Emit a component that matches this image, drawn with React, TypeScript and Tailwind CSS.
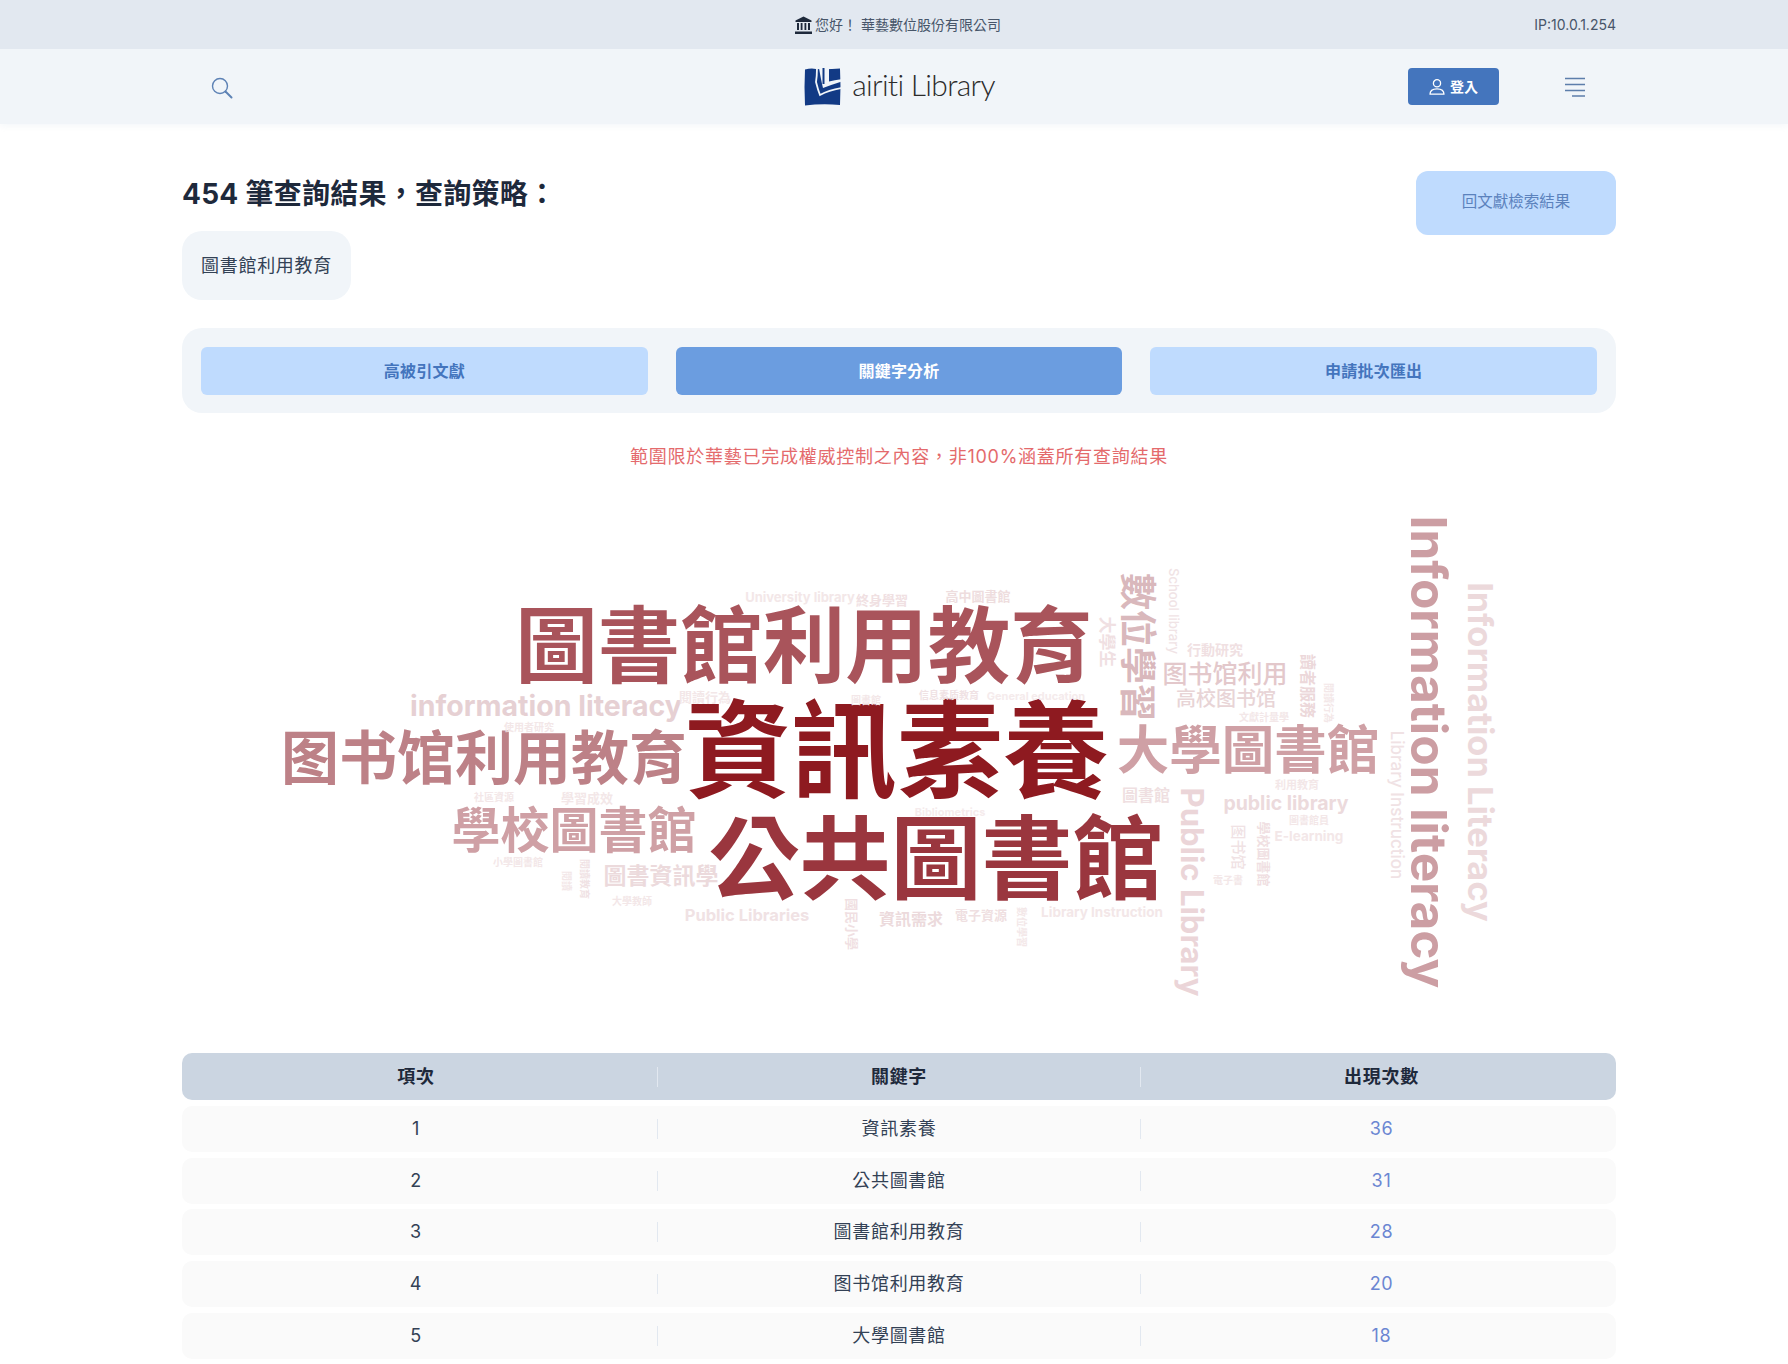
const TABS = [
  { label: "高被引文獻", active: false },
  { label: "關鍵字分析", active: true },
  { label: "申請批次匯出", active: false },
];

const ROWS = [
  { no: 1, keyword: "資訊素養", count: 36 },
  { no: 2, keyword: "公共圖書館", count: 31 },
  { no: 3, keyword: "圖書館利用教育", count: 28 },
  { no: 4, keyword: "图书馆利用教育", count: 20 },
  { no: 5, keyword: "大學圖書館", count: 18 },
];

// word cloud: text, centre x, centre y (page coords), size, colour, weight, rotated
type Word = [string, number, number, number, string, number, boolean?];

const WORDS: Word[] = [
  ["資訊素養", 897, 750, 106, "#8e1a20", 700],
  ["公共圖書館", 936, 858, 91, "#9a363e", 700],
  ["圖書館利用教育", 804, 645, 82.5, "#a9545b", 700],
  ["图书馆利用教育", 484, 757, 58, "#bd8187", 600],
  ["學校圖書館", 574, 829, 49, "#cfa0a5", 600],
  ["大學圖書館", 1248, 749, 52.5, "#cfa0a5", 600],
  ["information literacy", 546, 705, 28.5, "#e6d0d3", 700],
  ["Information literacy", 1428, 751, 49.5, "#cc9ea3", 700, true],
  ["Information Literacy", 1480, 751, 34.5, "#ecd9db", 700, true],
  ["Public Library", 1192, 891, 31, "#ebd5d8", 700, true],
  ["數位學習", 1137, 646, 37, "#d9b8bc", 600, true],
  ["Library Instruction", 1396, 804, 17, "#f0e2e4", 500, true],
  ["School library", 1173, 610, 13, "#f0e3e5", 500, true],
  ["大學生", 1106, 641, 17, "#f0e0e2", 600, true],
  ["图书馆利用", 1225, 673, 25, "#e3c8cb", 500],
  ["高校图书馆", 1226, 698, 20, "#e8d4d6", 500],
  ["行動研究", 1215, 649, 14, "#f0e0e2", 600],
  ["讀者服務", 1308, 685, 16, "#ecd8da", 600, true],
  ["閱讀行為", 1329, 702, 10, "#f3e7e8", 600, true],
  ["文獻計量學", 1264, 716, 10, "#f3e7e8", 600],
  ["利用教育", 1297, 784, 11, "#f3e7e8", 600],
  ["public library", 1286, 803, 19.5, "#ecdadc", 700],
  ["圖書館", 1146, 794, 16, "#efdfe1", 600],
  ["圖書館員", 1309, 819, 10, "#f3e7e8", 600],
  ["E-learning", 1309, 836, 13.5, "#f3e7e8", 700],
  ["图书馆", 1238, 846, 15, "#f0e2e4", 500, true],
  ["學校圖書館", 1263, 853, 13, "#f0dfe2", 600, true],
  ["電子書", 1228, 879, 10, "#f3e7e8", 600],
  ["Library Instruction", 1102, 912, 13.5, "#f3e7e8", 700],
  ["電子資源", 981, 914, 13, "#efdfe1", 600],
  ["資訊需求", 911, 918, 16, "#ecdadc", 600],
  ["Public Libraries", 747, 914, 16.5, "#f0e2e4", 700],
  ["國民小學", 851, 923, 13, "#f0dfe2", 600, true],
  ["數位學習", 1022, 926, 10, "#f3e7e8", 600, true],
  ["大學教師", 632, 900, 10, "#f3e7e8", 600],
  ["圖書資訊學", 661, 875, 23, "#ecdadc", 600],
  ["小學圖書館", 518, 861, 10, "#f3e7e8", 600],
  ["閱讀", 567, 880, 10, "#f3e7e8", 600, true],
  ["閱讀教育", 585, 878, 10, "#f0e2e4", 600, true],
  ["學習成效", 587, 797, 13, "#f3e7e8", 600],
  ["社區資源", 494, 796, 10, "#f3e7e8", 600],
  ["使用者研究", 529, 726, 10, "#f3e7e8", 600],
  ["閱讀行為", 705, 696, 13, "#f3e7e8", 600],
  ["University library", 800, 596, 13, "#f3e7e8", 700],
  ["終身學習", 882, 599, 13, "#f0e0e2", 600],
  ["高中圖書館", 978, 595, 13, "#eeddde", 600],
  ["圖書館", 866, 699, 10, "#f3e7e8", 600],
  ["信息素质教育", 949, 694, 10, "#f0e2e4", 600],
  ["General education", 1036, 695, 11, "#f5ebec", 700],
  ["Bibliometrics", 950, 811, 11, "#f5ebec", 700],
];

function BankIcon() {
  return (
    <svg viewBox="0 0 17 18" className="mr-[3px] h-[18px] w-[17px]" fill="#1e293b">
      <path d="M8.5 0.5 L16.5 4.5 V6 H0.5 V4.5 Z" />
      <path d="M2 7h2v7H2zM5.7 7h1.8v7H5.7zM9.5 7h1.8v7H9.5zM13 7h2v7h-2z" />
      <path d="M0 15.5h17V18H0z" />
    </svg>
  );
}

function SearchIcon() {
  return (
    <svg viewBox="0 0 22 22" className="mt-[2px] h-[22px] w-[22px] text-[#5d82b5]" fill="none" stroke="currentColor">
      <circle cx="9" cy="9" r="7.5" strokeWidth="1.4" />
      <path d="M14.5 14.5 L20.5 20.5" strokeWidth="2" strokeLinecap="round" />
    </svg>
  );
}

function UserIcon() {
  return (
    <svg viewBox="0 0 16 16" className="h-4 w-4" fill="none" stroke="currentColor" strokeWidth="1.3">
      <circle cx="8" cy="4.3" r="3.6" />
      <path d="M1 15.2c0-3.6 3-5.4 7-5.4s7 1.8 7 5.4z" strokeLinejoin="round" />
    </svg>
  );
}

function LogoMark() {
  return (
    <svg viewBox="0 0 37 38" className="h-[38px] w-[37px]">
      <path d="M1 1.5 Q7 0 12 1 L12 1 Q24 1.5 36 0.5 Q37 18 36 37 Q18 35.5 1 37.5 Q0 19 1 1.5 Z" fill="#123a85" />
      <path d="M13 -1 Q13 8 12 14 Q14 22 16 27 Q25 22 38 20" fill="none" stroke="#f1f5f9" strokeWidth="1.8" />
      <path d="M15 0 L15 0 Q17 12 19 20 Q27 17 38 13.5 L38 11 Q31 12 25 13.5 L25 0 Z" fill="#f1f5f9" />
      <path d="M19.5 0 L19.5 16" stroke="#123a85" strokeWidth="2" />
    </svg>
  );
}

function MenuIcon() {
  return (
    <svg viewBox="0 0 20 20" className="h-5 w-5 text-[#5d7eab]" fill="none" stroke="currentColor" strokeWidth="1.6">
      <path d="M0 1.5h20M0 7.5h20M0 13.5h20M7 19h13" />
    </svg>
  );
}

function WordCloud() {
  return (
    <div className="relative h-[560px]">
      {WORDS.map(([text, x, y, size, color, weight, rotated], i) => (
        <span
          key={i}
          className={
            rotated
              ? "absolute whitespace-nowrap leading-none -translate-x-1/2 -translate-y-1/2 rotate-90"
              : "absolute whitespace-nowrap leading-none -translate-x-1/2 -translate-y-1/2"
          }
          style={{ left: x - 182, top: y - 480, fontSize: size, color, fontWeight: weight }}
        >
          {text}
        </span>
      ))}
    </div>
  );
}

export default function App() {
  return (
    <div className="h-[1364px] overflow-hidden bg-white font-['Inter','Noto_Sans_CJK_TC',sans-serif] text-[#334155]">
      {/* top strip */}
      <div className="relative flex h-[49px] items-center justify-center bg-[#e2e8f0] pl-2 text-sm text-[#475569]">
        <BankIcon />
        <span>您好！ 華藝數位股份有限公司</span>
        <span className="absolute right-[172px] text-sm">IP:10.0.1.254</span>
      </div>

      {/* nav */}
      <header className="grid h-[75px] grid-cols-[1fr_auto_1fr] items-center bg-[#f1f5f9] pl-[211px] pr-[203px] shadow-[0_2px_6px_rgba(241,245,249,0.8)]">
        <SearchIcon />
        <div className="ml-[3px] flex items-center gap-[11px]">
          <LogoMark />
          <span className="mb-[5px] font-['Lato',sans-serif] text-[30px] font-light leading-none tracking-[-0.7px] text-[#2b2b2b]">
            airiti Library
          </span>
        </div>
        <div className="flex items-center justify-end gap-[66px]">
          <button className="flex h-[37px] w-[91px] items-center justify-center gap-[5px] rounded bg-[#4475bd] text-sm font-bold text-white">
            <UserIcon />
            登入
          </button>
          <MenuIcon />
        </div>
      </header>

      <main className="ml-[182px] w-[1434px]">
        <div className="flex items-start justify-between pt-[47px]">
          <div>
            <h1 className="mt-[2px] text-[28px] font-bold leading-[42px] tracking-[0.25px] text-[#1e293b]">
              454 筆查詢結果，查詢策略：
            </h1>
            <div className="mt-4 flex h-[69px] w-[169px] items-center justify-center rounded-[20px] bg-[#f1f5f9] text-lg tracking-[0.7px]">
              圖書館利用教育
            </div>
          </div>
          <button className="h-16 w-[200px] rounded-xl bg-[#bfdbfe] pb-[2px] text-[15.5px] text-[#5b82bd]">
            回文獻檢索結果
          </button>
        </div>

        <div className="mt-7 flex gap-7 rounded-[20px] bg-[#f1f5f9] px-[19px] py-[18.5px]">
          {TABS.map((tab) => (
            <button
              key={tab.label}
              className={
                tab.active
                  ? "h-12 flex-1 rounded-md bg-[#6b9de0] text-base font-bold tracking-[0.2px] text-white"
                  : "h-12 flex-1 rounded-md bg-[#bfdbfe] text-base font-bold tracking-[0.2px] text-[#4475bd]"
              }
            >
              {tab.label}
            </button>
          ))}
        </div>

        <p className="mt-[30px] text-center text-lg leading-7 tracking-[0.75px] text-[#e46a6c]">
          範圍限於華藝已完成權威控制之內容，非100%涵蓋所有查詢結果
        </p>

        <div className="mt-[10px]">
          <WordCloud />
        </div>

        <div className="mt-[12px] flex flex-col gap-[5.75px] text-lg tracking-[0.7px]">
          <div className="grid h-[47px] grid-cols-[475px_1px_482px_1px_475px] items-center rounded-[10px] bg-[#cbd5e1] pt-[1px] text-center font-bold text-[#1e293b]">
            <span className="pr-[7px]">項次</span>
            <i className="h-5 bg-[#e2e8f0]" />
            <span>關鍵字</span>
            <i className="h-5 bg-[#e2e8f0]" />
            <span className="pl-[6px]">出現次數</span>
          </div>
          {ROWS.map((row) => (
            <div
              key={row.no}
              className="grid h-[46px] grid-cols-[475px_1px_482px_1px_475px] items-center rounded-[10px] bg-[#fafafa] text-center"
            >
              <span className="pr-[7px]">{row.no}</span>
              <i className="h-5 bg-[#e2e8f0]" />
              <span>{row.keyword}</span>
              <i className="h-5 bg-[#e2e8f0]" />
              <span className="pl-[6px] text-[#6b86d2]">{row.count}</span>
            </div>
          ))}
        </div>
      </main>
    </div>
  );
}
